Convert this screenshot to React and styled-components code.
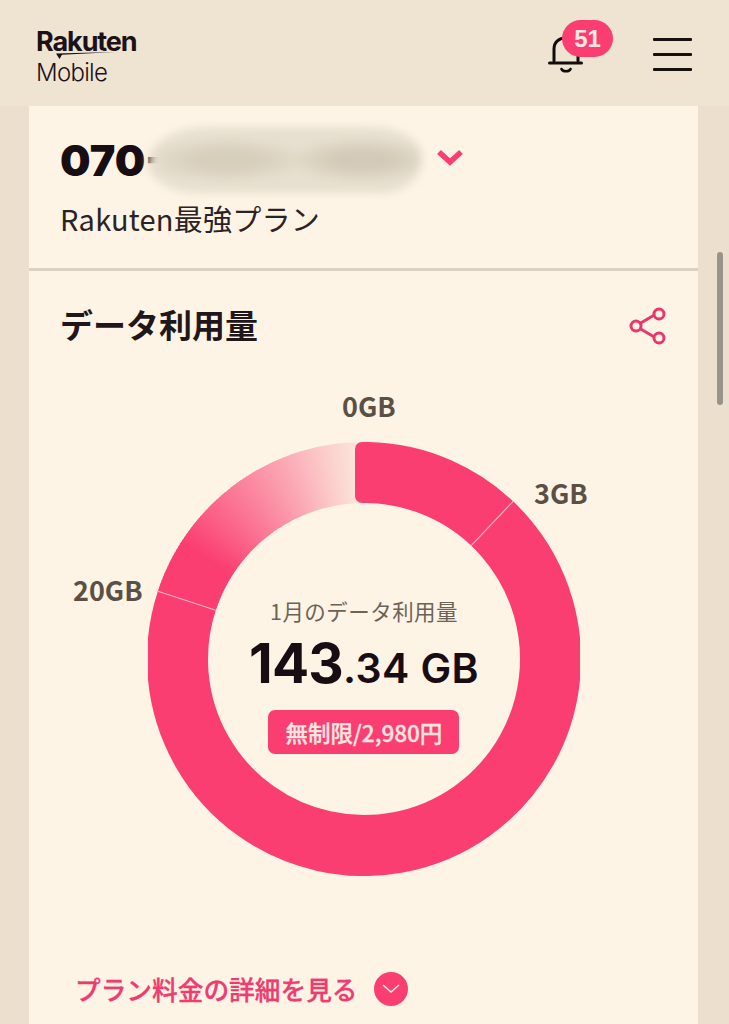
import React from "react";
import styled, { createGlobalStyle } from "styled-components";

const Global = createGlobalStyle`
  html, body { margin: 0; padding: 0; background: #efe4d2; }
  body { font-family: "Noto Sans CJK JP", "Noto Sans", sans-serif; }
  * { box-sizing: border-box; }
`;

const Page = styled.div`
  position: relative;
  width: 729px;
  height: 1024px;
  overflow: hidden;
  background: #ecdfcd;
`;

const Header = styled.header`
  height: 106px;
  background: #efe4d2;
  display: flex;
  align-items: flex-start;
  justify-content: space-between;
  padding: 30px 37px 0 36px;
`;

const Logo = styled.div`
  display: flex;
  flex-direction: column;
  color: #1b1117;
  font-family: "Inter", sans-serif;
  line-height: 1;
`;

const LogoTop = styled.div`
  position: relative;
  font-size: 27px;
  font-weight: 700;
  letter-spacing: -1.1px;
  height: 24px;
  line-height: 24px;
`;

const Swoosh = styled.svg`
  position: absolute;
  left: 20px;
  top: 22px;
`;

const LogoBottom = styled.div`
  font-size: 24px;
  font-weight: 300;
  letter-spacing: -0.7px;
  margin-top: 6px;
  line-height: 26px;
`;

const HeaderActions = styled.div`
  display: flex;
  align-items: flex-start;
  gap: 40px;
  margin-top: -10px;
`;

const BellWrap = styled.div`
  position: relative;
  width: 65px;
  height: 54px;
`;

const BellIcon = styled.svg`
  position: absolute;
  left: 0;
  top: 15px;
`;

const Badge = styled.span`
  position: absolute;
  left: 14px;
  top: 0;
  width: 51px;
  height: 37px;
  border-radius: 19px;
  background: #fb3e71;
  color: #fde8e6;
  font-family: "Liberation Sans", sans-serif;
  font-weight: 700;
  font-size: 24px;
  display: flex;
  align-items: center;
  justify-content: center;
`;

const MenuButton = styled.div`
  width: 39px;
  display: flex;
  flex-direction: column;
  gap: 12px;
  margin-top: 18px;
`;

const MenuLine = styled.span`
  display: block;
  height: 3px;
  background: #17100f;
  border-radius: 1px;
`;

const Card = styled.main`
  width: 669px;
  margin-left: 29px;
  background: #fef4e6;
`;

const LineSection = styled.section`
  height: 165px;
  padding: 29px 31px 0;
  border-bottom: 3px solid #dbd1c1;
`;

const NumberRow = styled.div`
  position: relative;
  display: flex;
  align-items: center;
  height: 50px;
`;

const PhoneNumber = styled.span`
  font-family: "Inter", sans-serif;
  font-weight: 900;
  font-size: 43px;
  letter-spacing: 0;
  color: #170d13;
`;

const Redaction = styled.div`
  position: absolute;
  left: 88px;
  top: -8px;
  width: 274px;
  height: 66px;
  border-radius: 60px 50px 40px 50px / 36px 30px 34px 30px;
  background: radial-gradient(ellipse 82px 22px at 29% 50%, #d7cebc 0%, #d7cebc 40%, rgba(215, 206, 188, 0) 100%),
    radial-gradient(ellipse 74px 22px at 78% 50%, #d3cab7 0%, #d3cab7 40%, rgba(211, 202, 183, 0) 100%),
    #e7dfcf;
  filter: blur(4px);
`;

const Chevron = styled.svg`
  position: absolute;
  left: 376px;
  top: 13px;
`;

const PlanName = styled.div`
  margin-top: 13px;
  font-size: 29px;
  letter-spacing: 0.25px;
  line-height: 40px;
  color: #2a2224;
  font-weight: 400;
`;

const UsageSection = styled.section`
  padding: 29px 31px 0;
  height: 753px;
`;

const TitleRow = styled.div`
  display: flex;
  align-items: center;
  justify-content: space-between;
  height: 48px;
`;

const Title = styled.h2`
  margin: 0;
  font-size: 33px;
  font-weight: 700;
  color: #1f1719;
  line-height: 48px;
`;

const ShareIcon = styled.svg`
  display: block;
  margin-top: 4px;
`;

const ChartFrame = styled.div`
  position: relative;
  width: 432px;
  height: 434px;
  margin: 94px 0 0 88px;
  display: grid;
  justify-items: center;
  align-items: start;
`;

const Ring = styled.svg`
  position: absolute;
  inset: 0;
`;

const Tick = styled.span`
  position: absolute;
  left: ${(p) => p.$x}px;
  top: ${(p) => p.$y}px;
  font-size: 27px;
  font-weight: 700;
  line-height: 30px;
  color: #5a5045;
  white-space: nowrap;
`;

const Center = styled.div`
  position: relative;
  display: flex;
  flex-direction: column;
  align-items: center;
  margin-top: 154px;
`;

const CenterLabel = styled.div`
  font-size: 21.5px;
  letter-spacing: 0.45px;
  line-height: 30px;
  color: #6c6358;
`;

const Amount = styled.div`
  font-family: "Inter", sans-serif;
  font-weight: 700;
  color: #170d13;
  line-height: 62px;
  margin-top: 6px;
  white-space: nowrap;
`;

const AmountMain = styled.span`
  font-size: 55px;
  letter-spacing: -0.8px;
`;

const AmountSub = styled.span`
  font-size: 41px;
  font-weight: 600;
  letter-spacing: 0.4px;
`;

const PlanTag = styled.div`
  margin-top: 2px;
  width: 191px;
  height: 44px;
  border-radius: 7px;
  background: #fb3e71;
  color: #fde6e2;
  font-size: 22.5px;
  font-weight: 500;
  -webkit-text-stroke: 0.3px #fde6e2;
  display: flex;
  align-items: center;
  justify-content: center;
`;

const DetailLink = styled.div`
  margin: 95px 0 0 15px;
  display: flex;
  align-items: center;
  gap: 16px;
  color: #ef3b70;
  font-size: 25.7px;
  font-weight: 500;
  line-height: 36px;
  -webkit-text-stroke: 0.3px #ef3b70;
`;

const RoundChevron = styled.span`
  width: 34px;
  height: 34px;
  border-radius: 50%;
  background: #fb3e71;
  display: flex;
  align-items: center;
  justify-content: center;
`;

const ScrollThumb = styled.div`
  position: absolute;
  left: 717px;
  top: 252px;
  width: 6px;
  height: 153px;
  border-radius: 3px;
  background: #98948a;
`;

const CX = 216;
const CY = 217;
const R = 186.5;
const PINK = "#fb3e71";
const pt = (a, r = R) => {
  const t = (a * Math.PI) / 180;
  return [CX + r * Math.sin(t), CY - r * Math.cos(t)];
};
const arc = (a, b) => {
  const [x1, y1] = pt(a);
  const [x2, y2] = pt(b);
  return `M${x1.toFixed(2)} ${y1.toFixed(2)}A${R} ${R} 0 ${b - a > 180 ? 1 : 0} 1 ${x2.toFixed(2)} ${y2.toFixed(2)}`;
};
const mix = (t) => {
  const from = [251, 62, 113];
  const to = [251, 230, 219];
  const c = from.map((v, i) => Math.round(v + (to[i] - v) * t));
  return `rgb(${c.join(",")})`;
};

const fade = Array.from({ length: 72 }, (_, i) => {
  const a = 288 + i;
  const p = (a + 0.5 - 288) / 72;
  const t = p < 0.2 ? 0 : Math.min(1, (p - 0.2) / 0.77);
  return { a, color: mix(t) };
});

const Divider = ({ angle }) => {
  const [x1, y1] = pt(angle, 156);
  const [x2, y2] = pt(angle, 217);
  return <line x1={x1} y1={y1} x2={x2} y2={y2} stroke="#fcb4c4" strokeWidth="1.2" />;
};

export default function App() {
  return (
    <Page>
      <Global />
      <Header>
        <Logo>
          <LogoTop>
            Rakuten
            <Swoosh width="60" height="8" viewBox="0 0 60 8">
              <path d="M0 1.5L59 0L6 2.8L3.5 7Z" fill="#1b1117" />
            </Swoosh>
          </LogoTop>
          <LogoBottom>Mobile</LogoBottom>
        </Logo>
        <HeaderActions>
          <BellWrap>
            <BellIcon width="36" height="40" viewBox="0 0 36 40" fill="none" stroke="#120c0c" strokeWidth="3" strokeLinecap="round">
              <path d="M6 26V14C6 7 11 3 18 3C25 3 30 7 30 14V26" />
              <path d="M1.5 28H33.5" />
              <path d="M13.5 34C14.5 37 21.5 37 22.5 34" strokeWidth="2.6" />
            </BellIcon>
            <Badge>51</Badge>
          </BellWrap>
          <MenuButton>
            <MenuLine />
            <MenuLine />
            <MenuLine />
          </MenuButton>
        </HeaderActions>
      </Header>
      <Card>
        <LineSection>
          <NumberRow>
            <PhoneNumber>070-</PhoneNumber>
            <Redaction />
            <Chevron width="28" height="20" viewBox="0 0 28 20" fill="none">
              <path d="M3 4L14 14L25 4" stroke="#fb3e71" strokeWidth="5.5" />
            </Chevron>
          </NumberRow>
          <PlanName>Rakuten最強プラン</PlanName>
        </LineSection>
        <UsageSection>
          <TitleRow>
            <Title>データ利用量</Title>
            <ShareIcon width="38" height="38" viewBox="0 0 38 38" fill="none" stroke="#e8376c" strokeWidth="3">
              <line x1="10" y1="17" x2="27" y2="7" />
              <line x1="10" y1="21" x2="27" y2="31" />
              <circle cx="7" cy="19" r="5" fill="#fef4e6" />
              <circle cx="30" cy="7" r="5" fill="#fef4e6" />
              <circle cx="30" cy="31" r="5" fill="#fef4e6" />
            </ShareIcon>
          </TitleRow>
          <ChartFrame>
            <Ring width="432" height="434" viewBox="0 0 432 434" fill="none">
              {fade.map(({ a, color }) => (
                <path key={a} d={arc(a, Math.min(a + 1.4, 360))} stroke={color} strokeWidth="61" />
              ))}
              <path d={arc(1, 288.2)} stroke={PINK} strokeWidth="61" />
              <rect x="207" y="0" width="20" height="61" rx="7" fill={PINK} />
              <Divider angle={43.4} />
              <Divider angle={288.2} />
            </Ring>
            <Tick $x={194} $y={-51}>0GB</Tick>
            <Tick $x={386} $y={36}>3GB</Tick>
            <Tick $x={-75} $y={133}>20GB</Tick>
            <Center>
              <CenterLabel>1月のデータ利用量</CenterLabel>
              <Amount>
                <AmountMain>143</AmountMain>
                <AmountSub>.34 GB</AmountSub>
              </Amount>
              <PlanTag>無制限/2,980円</PlanTag>
            </Center>
          </ChartFrame>
          <DetailLink>
            プラン料金の詳細を見る
            <RoundChevron>
              <svg width="20" height="12" viewBox="0 0 20 12" fill="none">
                <path d="M2 2L10 9L18 2" stroke="#fde6e2" strokeWidth="1.6" />
              </svg>
            </RoundChevron>
          </DetailLink>
        </UsageSection>
      </Card>
      <ScrollThumb />
    </Page>
  );
}
